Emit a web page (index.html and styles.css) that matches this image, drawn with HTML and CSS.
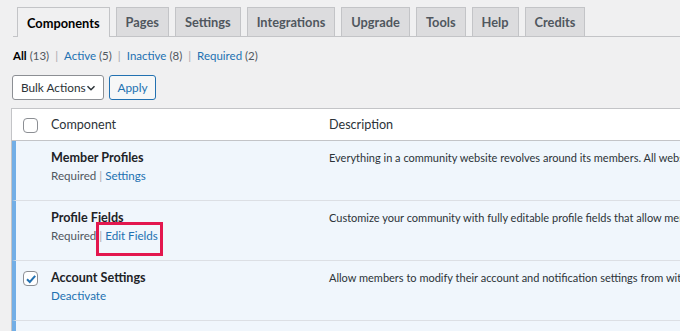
FILE: index.html
```html
<!DOCTYPE html>
<html>
<head>
<meta charset="utf-8">
<link rel="stylesheet" href="styles.css">
</head>
<body>
<div class="wrap">
  <nav class="tabs">
    <a class="tab active">Components</a>
    <a class="tab">Pages</a>
    <a class="tab">Settings</a>
    <a class="tab">Integrations</a>
    <a class="tab">Upgrade</a>
    <a class="tab">Tools</a>
    <a class="tab">Help</a>
    <a class="tab">Credits</a>
  </nav>
  <ul class="filters">
    <li><b class="current">All</b> <span class="count">(13)</span><span class="sep">|</span></li>
    <li><a>Active</a> <span class="count">(5)</span><span class="sep">|</span></li>
    <li><a>Inactive</a> <span class="count">(8)</span><span class="sep">|</span></li>
    <li><a>Required</a> <span class="count">(2)</span></li>
  </ul>
  <div class="tablenav">
    <div class="select">Bulk Actions
      <svg class="chev" width="10" height="10" viewBox="0 0 10 10"><path d="M1.5 3.2 L5 6.7 L8.5 3.2" fill="none" stroke="#2c3338" stroke-width="1.5"/></svg>
    </div>
    <button class="btn">Apply</button>
  </div>
  <div class="list">
    <div class="row head">
      <div class="cb"><span class="box"></span></div>
      <div class="col-name">Component</div>
      <div class="col-desc">Description</div>
    </div>
    <div class="row active">
      <div class="cb"></div>
      <div class="col-name">
        <div class="title">Member Profiles</div>
        <div class="actions"><span class="req">Required</span><span class="sep">|</span><a>Settings</a></div>
      </div>
      <div class="col-desc">Everything in a community website revolves around its members. All website members are given member profiles.</div>
    </div>
    <div class="row active">
      <div class="cb"></div>
      <div class="col-name">
        <div class="title">Profile Fields</div>
        <div class="actions"><span class="req">Required</span><span class="sep">|</span><a class="marked">Edit Fields<span class="highlight"></span></a></div>
      </div>
      <div class="col-desc">Customize your community with fully editable profile fields that allow members to describe themselves.</div>
    </div>
    <div class="row active">
      <div class="cb"><span class="box checked"><svg width="12" height="12" viewBox="0 0 12 12"><path d="M2 6.2 L4.8 9 L10.2 2.8" fill="none" stroke="#2271b1" stroke-width="2"/></svg></span></div>
      <div class="col-name">
        <div class="title">Account Settings</div>
        <div class="actions"><a>Deactivate</a></div>
      </div>
      <div class="col-desc">Allow members to modify their account and notification settings from within their profile.</div>
    </div>
    <div class="row active">
      <div class="cb"></div>
      <div class="col-name"></div>
      <div class="col-desc"></div>
    </div>
  </div>
</div>
</body>
</html>
```
FILE: styles.css
```css
html, body {
  margin: 0;
  padding: 0;
  background: #f0f0f1;
  overflow: hidden;
  font-family: Lato, "Liberation Sans", sans-serif;
  color: #3c434a;
}
.wrap {
  width: 1100px;
  padding-top: 7px;
}
.tabs {
  display: flex;
  gap: 6px;
  margin-left: 13px;
  padding-left: 4px;
  border-bottom: 1px solid #c3c4c7;
  height: 29px;
}
.tab {
  display: flex;
  align-items: center;
  height: 28px;
  padding: 0 9px;
  border: 1px solid #c3c4c7;
  border-bottom: none;
  background: #dcdcde;
  color: #50575e;
  font-size: 12.8px;
  font-weight: 700;
}
.tab.active {
  background: #f0f0f1;
  color: #000;
  height: 29px;
  margin-bottom: -1px;
}
.filters {
  list-style: none;
  display: flex;
  margin: 11px 0 0 13px;
  padding: 0;
  font-size: 11.5px;
  height: 16px;
  line-height: 16px;
  color: #50575e;
}
.filters .current { color: #000; }
.filters a { color: #2271b1; }
.filters .sep, .actions .sep { color: #a7aaad; margin: 0 6px; }
.tablenav {
  display: flex;
  gap: 5px;
  margin: 11px 0 0 12px;
  height: 25px;
}
.select {
  display: flex;
  align-items: center;
  justify-content: space-between;
  box-sizing: border-box;
  width: 92px;
  height: 25px;
  padding: 0 7px 0 8px;
  border: 1px solid #8c8f94;
  border-radius: 3px;
  background: #fff;
  color: #2c3338;
  font-size: 11.8px;
}
.chev { margin-top: 1px; }
.btn {
  box-sizing: border-box;
  width: 47px;
  height: 25px;
  padding: 0;
  border: 1px solid #2271b1;
  border-radius: 3px;
  background: #f6f7f7;
  color: #2271b1;
  font-family: inherit;
  font-size: 11.8px;
}
.list {
  margin: 8px 0 0 11px;
  border-left: 1px solid #c3c4c7;
  border-top: 1px solid #c3c4c7;
  background: #fff;
}
.row {
  display: grid;
  grid-template-columns: 35px 278px 1fr;
  box-sizing: border-box;
}
.row.head {
  height: 32px;
  padding-left: 4px;
  background: #fff;
  border-bottom: 1px solid #c3c4c7;
  align-items: center;
  font-size: 12.6px;
  color: #2c3338;
}
.row.active {
  height: 60px;
  background: #f0f6fc;
  border-left: 4px solid #72aee6;
  border-bottom: 1px solid #dcdfe4;
}
.cb {
  padding-left: 7px;
}
.row.head .cb { padding-top: 1px; }
.row.active .cb { padding-top: 10px; }
.box {
  display: flex;
  align-items: center;
  justify-content: center;
  box-sizing: border-box;
  width: 15px;
  height: 15px;
  border: 1px solid #8c8f94;
  border-radius: 4px;
  background: #fff;
}
.row.active .col-name { padding-top: 9px; }
.title {
  font-size: 12.6px;
  font-weight: 700;
  color: #1d2327;
  line-height: 16px;
}
.actions {
  margin-top: 2px;
  font-size: 11.6px;
  line-height: 16px;
  color: #50575e;
  display: flex;
}
.actions a { color: #2271b1; }
.actions .sep { margin: 0 3px 0 3px; }
.marked { position: relative; }
.highlight {
  position: absolute;
  left: -9px;
  top: -6px;
  width: 67px;
  height: 34px;
  box-sizing: border-box;
  border: 3px solid #e3174e;
}
.col-desc {
  font-size: 11px;
  color: #2c3338;
  white-space: nowrap;
  padding-left: 0;
}
.row.head .col-desc { font-size: 12.6px; }
.row.active .col-desc { padding-top: 10px; line-height: 14px; }
```
